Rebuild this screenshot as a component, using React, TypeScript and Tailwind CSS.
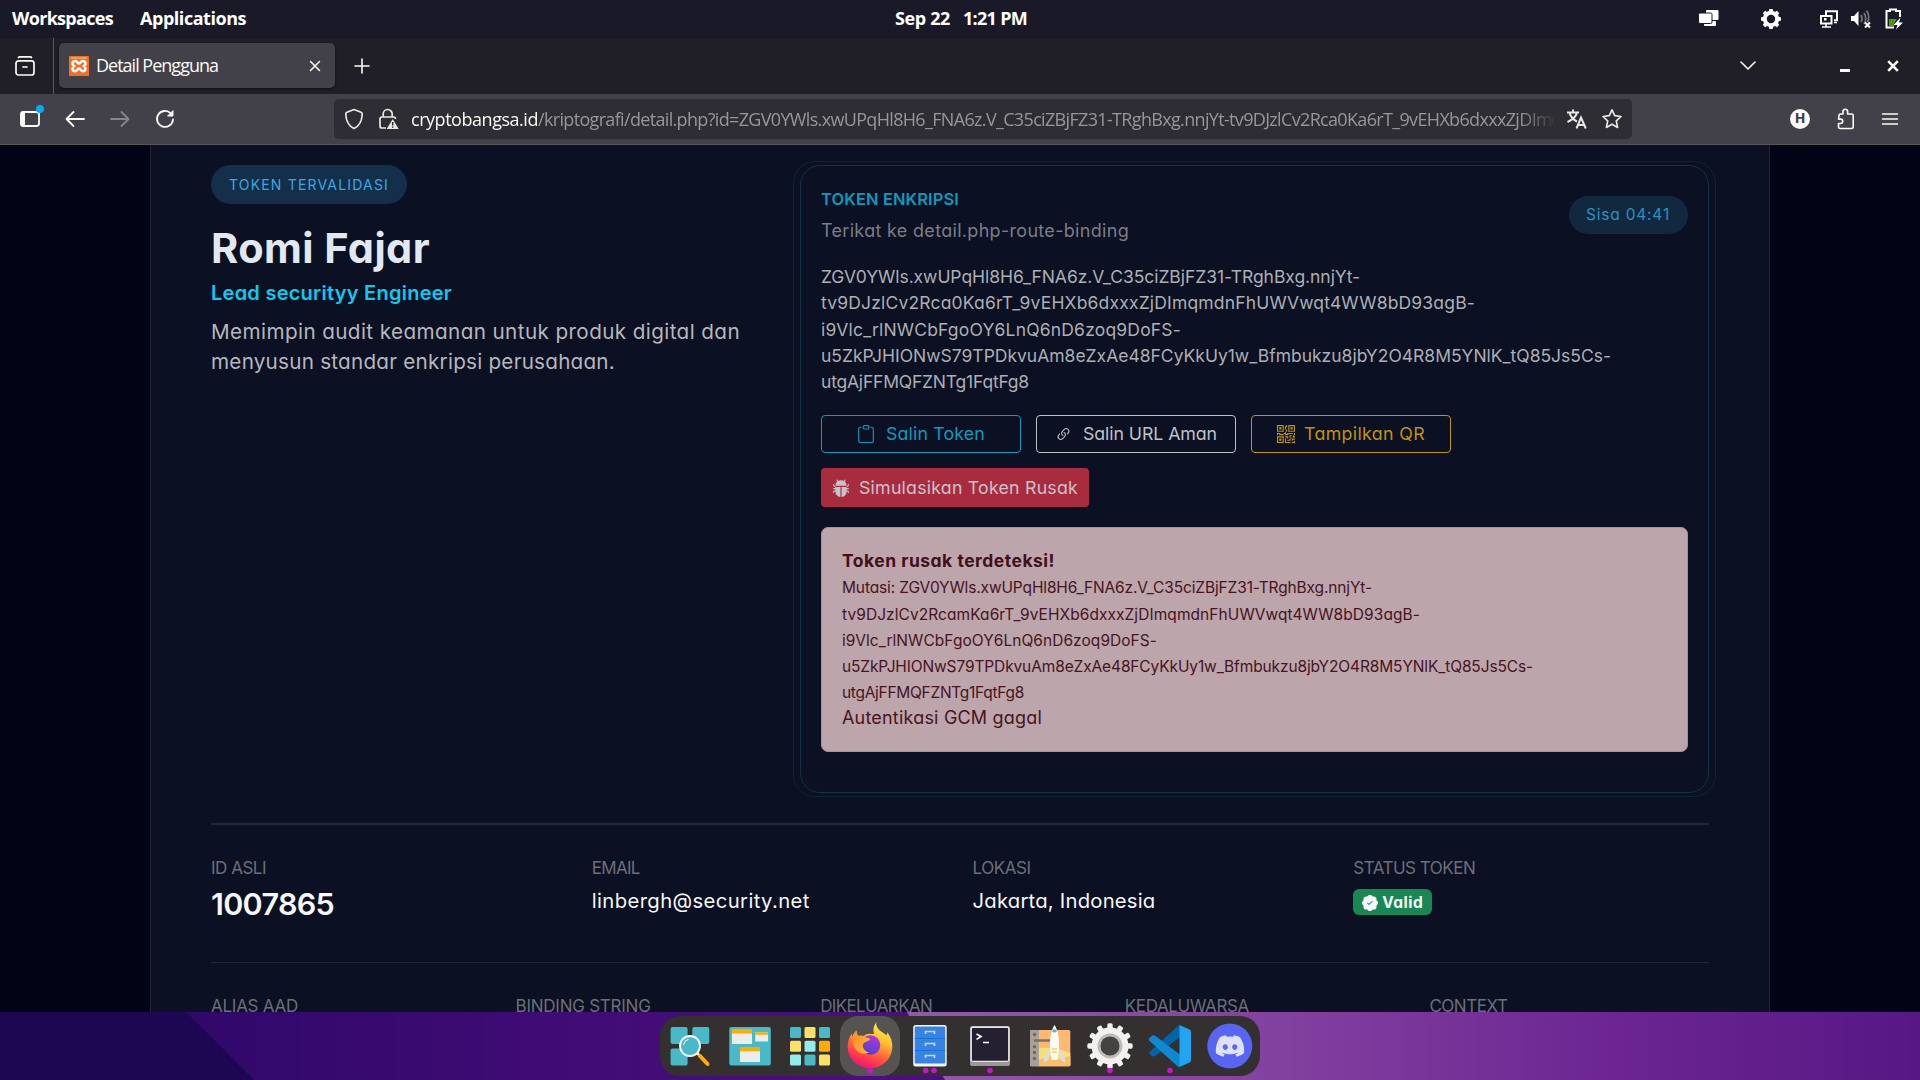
import { useLayoutEffect, useRef, useState, type ReactNode } from "react";
import { BsBugFill, BsClipboard, BsLink45Deg, BsPatchCheckFill, BsQrCode } from "react-icons/bs";
import { FaDiscord } from "react-icons/fa";

/** One line of text whose letter spacing is adjusted so that it spans `w` pixels. */
function Line({ w, className = "", children }: { w: number; className?: string; children: string }) {
  const ref = useRef<HTMLSpanElement>(null);
  const [spacing, setSpacing] = useState(0);
  useLayoutEffect(() => {
    const el = ref.current;
    if (!el) return;
    el.style.letterSpacing = "0px";
    const natural = el.getBoundingClientRect().width;
    const next = (w - natural) / children.length;
    el.style.letterSpacing = `${next}px`;
    setSpacing(next);
  }, [w, children]);
  return (
    <span className={`block ${className}`}>
      <span ref={ref} className="inline-block whitespace-pre" style={{ letterSpacing: `${spacing}px` }}>
        {children}
      </span>
    </span>
  );
}

function TopBar() {
  return (
    <header className="grid h-[38px] grid-cols-3 items-center bg-[#191928] pb-px text-[18px] font-bold text-white [font-stretch:88%]">
      <nav className="flex gap-[27px] pl-[12px]">
        <Line w={101}>Workspaces</Line>
        <Line w={106}>Applications</Line>
      </nav>
      <div className="flex justify-center gap-[13px] pl-[2px]">
        <Line w={55}>Sep 22</Line>
        <Line w={64}>1:21 PM</Line>
      </div>
      <div className="flex items-center justify-end pr-[16px]">
        <svg width="22" height="20" viewBox="0 0 22 20" className="mr-[40px]">
          <path d="M9 1h10.500a1 1 0 0 1 1 1v8a1 1 0 0 1-1 1H9a1 1 0 0 1-1-1V2a1 1 0 0 1 1-1z" fill="#fff" />
          <path d="M6 12h11a1 1 0 0 1 1 1v3a1 1 0 0 1-1 1H7a1 1 0 0 1-1-1z" fill="#fff" />
          <rect x="0.500" y="4" width="13.500" height="10.500" rx="1.500" fill="#fff" stroke="#191928" />
        </svg>
        <svg width="22" height="22" viewBox="0 0 22 22" className="mr-[37px]">
          <circle cx="11" cy="11" r="6.200" fill="none" stroke="#fff" strokeWidth="4" />
          {[0, 45, 90, 135, 180, 225, 270, 315].map((a) => (
            <rect key={a} x="9" y="1" width="4" height="4" rx="1" fill="#fff" transform={`rotate(${a} 11 11)`} />
          ))}
        </svg>
        <svg width="20" height="20" viewBox="0 0 20 20" className="mr-[11px]" fill="none">
          <path d="M7 6V2.200h11v9H15" stroke="#fff" strokeWidth="2" />
          <rect x="2" y="7" width="10.500" height="7.500" stroke="#fff" strokeWidth="2" />
          <path d="M5 9h2.500v2.500H5z" fill="#fff" />
          <path d="M3 18h9M7 15v3M15 13.500h3" stroke="#fff" strokeWidth="1.600" />
        </svg>
        <svg width="22" height="20" viewBox="0 0 22 20" className="mr-[12px]">
          <path d="M1 7h3l4.500-5v15L4 12H1z" fill="#fff" />
          <path d="M11 6q2 3.500 0 7M14 4q3.500 5.500 0 11M16.500 1.500q4 6 1 12" stroke="#74747e" strokeWidth="1.800" fill="none" />
          <path d="M15 13.500l5 5m0-5l-5 5" stroke="#fff" strokeWidth="2" />
        </svg>
        <svg width="20" height="22" viewBox="0 0 20 22">
          <path d="M6 3V1.500h6V3h4v6" stroke="#fff" strokeWidth="2" fill="none" />
          <path d="M7 3H2.500v16.500H10" stroke="#fff" strokeWidth="2" fill="none" />
          <path d="M5 11h8l-4 6h2l-1 1H5z" fill="#4e9a06" />
          <path d="M16.500 9.500L9.500 17h4l-1.500 4.500 7-7h-4z" fill="#fff" />
        </svg>
      </div>
    </header>
  );
}

function TabStrip() {
  return (
    <div className="flex h-[56px] items-center bg-[#201f28] text-[#fbfbf4]">
      <div className="flex h-full w-[54px] items-center justify-center border-r border-[#57575f] pr-[3px]">
        <svg width="20" height="20" viewBox="0 0 20 20" fill="none" stroke="#fbfbf4" strokeWidth="1.700" strokeLinecap="round">
          <path d="M3.500 1.500q.5-.7 1.500-.7h10q1 0 1.500.7" />
          <rect x="1" y="4.800" width="18" height="14.200" rx="2.500" />
          <path d="M8 11h4" />
        </svg>
      </div>
      <div className="ml-[5px] mt-[-1px] flex h-[45px] w-[276px] items-center rounded-[5px] bg-[#42414a] pl-[10px] pr-[14px] shadow-[0_1px_3px_rgba(0,0,0,0.6)]">
        <svg width="20" height="20" viewBox="0 0 20 20">
          <rect width="20" height="20" rx="1" fill="#f37021" />
          <path d="M2 1h16v2H2z" fill="#f79a62" />
          <path
            d="M6.300 5c-3 0-3.800 3.200-1.300 5-2.500 1.800-1.700 5.200 1 5.200 2.500 0 2-2.700 4-2.700s1.500 2.700 4 2.700c2.700 0 3.500-3.400 1-5.200 2.500-1.800 1.700-5-1.300-5C11.500 5 12 7.500 10 7.500S8.500 5 6.300 5z"
            fill="none" stroke="#fff" strokeWidth="2.600"
          />
        </svg>
        <Line w={122} className="ml-[7px] text-[18px]">Detail Pengguna</Line>
        <svg width="12" height="12" viewBox="0 0 12 12" stroke="#fbfbf4" strokeWidth="1.500" strokeLinecap="round" className="ml-auto">
          <path d="M1.500 1.500l9 9m0-9l-9 9" />
        </svg>
      </div>
      <svg width="16" height="16" viewBox="0 0 16 16" stroke="#fbfbf4" strokeWidth="1.600" strokeLinecap="round" className="ml-[19px]">
        <path d="M8 1v14M1 8h14" />
      </svg>
      <svg width="16" height="10" viewBox="0 0 16 10" fill="none" stroke="#fbfbf4" strokeWidth="1.600" strokeLinecap="round" strokeLinejoin="round" className="ml-auto mr-[84px]">
        <path d="M1 1l7 7 7-7" />
      </svg>
      <span className="mt-[8px] mr-[37px] h-[3px] w-[10px] bg-[#fbfbf4]" />
      <svg width="12" height="12" viewBox="0 0 12 12" stroke="#fbfbf4" strokeWidth="2.600" className="mr-[21px]">
        <path d="M1.200 1.200l9.600 9.600m0-9.600l-9.600 9.600" />
      </svg>
    </div>
  );
}

function NavBar() {
  return (
    <div className="flex h-[51px] items-center border-b border-[#55555b] bg-[#42414a] text-[18px]">
      <svg width="28" height="26" viewBox="0 0 28 26" className="mt-[-5px] ml-[18px]">
        <rect x="3" y="8" width="18" height="14" rx="2.500" fill="none" stroke="#fbfbf4" strokeWidth="1.800" />
        <path d="M4.500 7.500H7v15H4.500A2 2 0 0 1 2.500 20.500v-11a2 2 0 0 1 2-2z" fill="#fbfbf4" />
        <circle cx="22" cy="5" r="4" fill="#00adf5" />
      </svg>
      <svg width="20" height="18" viewBox="0 0 20 18" fill="none" stroke="#fbfbf4" strokeWidth="1.800" strokeLinecap="round" strokeLinejoin="round" className="ml-[19px]">
        <path d="M19 9H2M8.500 2L1.500 9l7 7" />
      </svg>
      <svg width="20" height="18" viewBox="0 0 20 18" fill="none" stroke="#85858a" strokeWidth="1.800" strokeLinecap="round" strokeLinejoin="round" className="ml-[25px]">
        <path d="M1 9h17M11.500 2l7 7-7 7" />
      </svg>
      <svg width="20" height="20" viewBox="0 0 20 20" fill="none" stroke="#fbfbf4" strokeWidth="1.800" strokeLinecap="round" className="ml-[25px]">
        <path d="M18 10.500a8 8 0 1 1-2.300-6.200" />
        <path d="M18 2v5h-5z" fill="#fbfbf4" strokeWidth="1" strokeLinejoin="round" />
      </svg>
      <div className="ml-[159px] flex h-[40px] w-[1298px] items-center rounded-[5px] bg-[#2e2d34] pl-[10px]">
        <svg width="20" height="22" viewBox="0 0 20 22" fill="none" stroke="#e8e8e2" strokeWidth="1.700" strokeLinejoin="round">
          <path d="M10 1.500l7 2.700q1.300.5 1.200 2C18 13 15 18 10 20.500 5 18 2 13 1.800 6.200q-.1-1.500 1.200-2z" />
        </svg>
        <svg width="20" height="22" viewBox="0 0 20 22" className="ml-[15px]">
          <path d="M4.200 9V6a4.500 4.500 0 0 1 9 0v3M7 20H3a2 2 0 0 1-2-2v-7a2 2 0 0 1 2-2h11.500q2 0 2 2" fill="none" stroke="#e8e8e2" strokeWidth="1.700" />
          <path d="M13.700 11l6 10H7.700z" fill="#e8e8e2" />
          <path d="M13.700 14v3.500m0 1v1.300" stroke="#2e2d34" strokeWidth="1.500" />
        </svg>
        <div className="ml-[12px] flex w-[1148px] overflow-hidden [mask-image:linear-gradient(to_right,#000_1108px,transparent_1146px)]">
          <Line w={127} className="shrink-0 text-[#fbfbf4]">cryptobangsa.id</Line>
          <Line w={998} className="shrink-0 text-[#97969a]">
            {"/kriptografi/detail.php?id=ZGV0YWls.xwUPqHl8H6_FNA6z.V_C35ciZBjFZ31-TRghBxg.nnjYt-tv9DJzlCv2Rca0Ka6rT_9vEHXb6dxxxZjDI"}
          </Line>
          <Line w={58} className="shrink-0 text-[#97969a]">mqmdn</Line>
        </div>
        <svg width="20" height="20" viewBox="0 0 20 20" fill="none" stroke="#e8e8e2" strokeWidth="2" className="ml-[8px] shrink-0">
          <path d="M0 3.500h12M6 .5v3M2.500 3.500q1.500 6 7.500 9M10 3.500Q8.500 9.500 .5 13" />
          <path d="M9.500 19.500l4.500-11 4.800 11M11 16h6.500" />
        </svg>
        <svg width="22" height="22" viewBox="0 0 22 22" fill="none" stroke="#e8e8e2" strokeWidth="1.700" strokeLinejoin="round" className="ml-[14px] shrink-0">
          <path d="M11 1.800l2.700 5.900 6.300.8-4.700 4.400 1.300 6.500L11 16.200l-5.600 3.200 1.300-6.500L2 8.500l6.300-.8z" />
        </svg>
      </div>
      <div className="ml-auto flex items-center pr-[21px]">
        <span className="flex h-[20px] w-[20px] items-center justify-center rounded-full bg-[#fbfbf4] font-[Inter] text-[13px] font-extrabold text-[#42414a]">H</span>
        <svg width="20" height="22" viewBox="0 0 20 22" fill="none" stroke="#fbfbf4" strokeWidth="1.600" strokeLinejoin="round" className="ml-[26px]">
          <path d="M3 7.500q0-1.500 1.500-1.500H7V3.500a2.300 2.300 0 0 1 4.600 0V6h3.900q1.700 0 1.700 1.700v11.100q0 1.700-1.700 1.700H4.200Q2.500 20.500 2.500 19v-3.500h2a2.200 2.200 0 0 0 0-4.400H2.500z" />
        </svg>
        <svg width="18" height="14" viewBox="0 0 18 14" stroke="#fbfbf4" strokeWidth="1.500" strokeLinecap="round" className="ml-[25px]">
          <path d="M1.500 2h15M1.500 7h15M1.500 12h15" />
        </svg>
      </div>
    </div>
  );
}

function Intro() {
  return (
    <div className="w-[582px] shrink-0 pt-[4px]">
      <div className="flex h-[39px] w-[196px] items-center rounded-full bg-[#142f49] pl-[18px] text-[14px] text-[#38a9e4]">
        <Line w={160}>TOKEN TERVALIDASI</Line>
      </div>
      <Line w={219} className="mt-[20px] text-[41.500px] leading-[48px] font-bold text-[#e2e8f0]">Romi Fajar</Line>
      <Line w={241} className="mt-[8px] text-[20px] leading-[26px] font-semibold text-[#0dcaf0]">Lead securityy Engineer</Line>
      <div className="mt-[11px] text-[20.700px] leading-[30px] text-[#b6b7bc]">
        <Line w={529}>Memimpin audit keamanan untuk produk digital dan</Line>
        <Line w={404}>menyusun standar enkripsi perusahaan.</Line>
      </div>
    </div>
  );
}

const tokenLines: [string, number][] = [
  ["ZGV0YWls.xwUPqHl8H6_FNA6z.V_C35ciZBjFZ31-TRghBxg.nnjYt-", 539],
  ["tv9DJzlCv2Rca0Ka6rT_9vEHXb6dxxxZjDImqmdnFhUWVwqt4WW8bD93agB-", 654],
  ["i9Vlc_rlNWCbFgoOY6LnQ6nD6zoq9DoFS-", 360],
  ["u5ZkPJHIONwS79TPDkvuAm8eZxAe48FCyKkUy1w_Bfmbukzu8jbY2O4R8M5YNlK_tQ85Js5Cs-", 790],
  ["utgAjFFMQFZNTg1FqtFg8", 208],
];

const mutatedLines: [string, number][] = [
  ["Mutasi: ZGV0YWls.xwUPqHl8H6_FNA6z.V_C35ciZBjFZ31-TRghBxg.nnjYt-", 530],
  ["tv9DJzlCv2RcamKa6rT_9vEHXb6dxxxZjDImqmdnFhUWVwqt4WW8bD93agB-", 578],
  ["i9Vlc_rlNWCbFgoOY6LnQ6nD6zoq9DoFS-", 315],
  ["u5ZkPJHIONwS79TPDkvuAm8eZxAe48FCyKkUy1w_Bfmbukzu8jbY2O4R8M5YNlK_tQ85Js5Cs-", 691],
  ["utgAjFFMQFZNTg1FqtFg8", 182],
];

function TokenCard() {
  return (
    <section className="h-[636px] w-[923px] shrink-0 rounded-[22px] border border-[#0e2434] px-[6px] py-[3px]">
      <div className="h-full rounded-[20px] border border-[#0c3346] px-[20px] pt-[17px]">
        <div className="flex items-start justify-between">
          <div className="leading-[32px]">
            <Line w={138} className="text-[16.500px] font-semibold text-[#0e9abd]">TOKEN ENKRIPSI</Line>
            <Line w={308} className="text-[18px] text-[#7b7e85]">Terikat ke detail.php-route-binding</Line>
          </div>
          <div className="mt-[13px] flex h-[38px] w-[119px] items-center rounded-full bg-[#12283f] pl-[17px] text-[15.500px] text-[#2a90c4]">
            <Line w={84}>Sisa 04:41</Line>
          </div>
        </div>
        <div className="mt-[17px] text-[17.500px] leading-[26.300px] text-[#adafb5]">
          {tokenLines.map(([t, w]) => (
            <Line key={t} w={w}>{t}</Line>
          ))}
        </div>
        <div className="mt-[20px] flex flex-wrap gap-[15px] text-[17.800px]">
          <button className="flex h-[38px] w-[200px] items-center rounded-[4px] border border-[#0e9abd] pl-[35px] text-[#0e9abd]">
            <BsClipboard size={18} />
            <Line w={99} className="ml-[11px]">Salin Token</Line>
          </button>
          <button className="flex h-[38px] w-[200px] items-center rounded-[4px] border border-[#bfc1c7] pl-[18px] text-[#bfc1c7]">
            <BsLink45Deg size={17} />
            <Line w={134} className="ml-[11px]">Salin URL Aman</Line>
          </button>
          <button className="flex h-[38px] w-[200px] items-center rounded-[4px] border border-[#c0930e] pl-[25px] text-[#c0930e]">
            <BsQrCode size={18} />
            <Line w={121} className="ml-[9px]">Tampilkan QR</Line>
          </button>
          <button className="flex h-[39px] w-[268px] items-center rounded-[4px] bg-[#a92c3e] pl-[11px] text-[#c8c3ca]">
            <BsBugFill size={18} />
            <Line w={219} className="ml-[9px]">Simulasikan Token Rusak</Line>
          </button>
        </div>
        <div className="mt-[20px] h-[225px] rounded-[7px] border border-[#b48a94] bg-[#bca5ab] px-[20px] pt-[20px] text-[#481322]">
          <Line w={213} className="text-[17.500px] leading-[26px] font-bold text-[#420f1b]">Token rusak terdeteksi!</Line>
          <div className="pt-px text-[15.500px] leading-[26.200px]">
            {mutatedLines.map(([t, w]) => (
              <Line key={t} w={w}>{t}</Line>
            ))}
          </div>
          <Line w={200} className="mt-[-2px] text-[18px] leading-[26px]">Autentikasi GCM gagal</Line>
        </div>
      </div>
    </section>
  );
}

function Field({ label, w, children }: { label: string; w: number; children?: ReactNode }) {
  return (
    <div>
      <Line w={w} className="text-[17px] leading-[26px] text-[#6b6f79]">{label}</Line>
      {children}
    </div>
  );
}

function Page() {
  return (
    <main className="flex h-[867px] justify-center overflow-hidden bg-[#010414] font-[Inter,sans-serif] [font-feature-settings:'cv11'] [font-stretch:100%]">
      <div className="h-full w-[1620px] border-x border-[#1f2536] bg-[#0b1022] pl-[60px] pt-[16px]">
        <div className="flex">
          <Intro />
          <TokenCard />
        </div>
        <div className="mt-[26px] h-[2px] w-[1498px] bg-[#222839]" />
        <div className="mt-[30px] grid h-[107px] w-[1523px] grid-cols-4 text-[20.300px] text-[#f6f7f8]">
          <Field label="ID ASLI" w={55}>
            <Line w={123} className="text-[30.500px] leading-[46px] font-semibold">1007865</Line>
          </Field>
          <Field label="EMAIL" w={48}>
            <Line w={218} className="leading-[40px]">linbergh@security.net</Line>
          </Field>
          <Field label="LOKASI" w={58}>
            <Line w={183} className="leading-[40px]">Jakarta, Indonesia</Line>
          </Field>
          <Field label="STATUS TOKEN" w={122}>
            <div className="mt-[8px] flex h-[26px] w-[79px] items-center rounded-[6px] bg-[#198754] pt-px pl-[9px] text-[15.500px] font-bold">
              <BsPatchCheckFill size={16} />
              <Line w={41} className="ml-[4px]">Valid</Line>
            </div>
          </Field>
        </div>
        <div className="h-px w-[1498px] bg-[#222839]" />
        <div className="mt-[30px] grid w-[1523px] grid-cols-5">
          <Field label="ALIAS AAD" w={87} />
          <Field label="BINDING STRING" w={135} />
          <Field label="DIKELUARKAN" w={112} />
          <Field label="KEDALUWARSA" w={124} />
          <Field label="CONTEXT" w={78} />
        </div>
      </div>
    </main>
  );
}

function Cell({ children, active, dots = 0 }: { children: ReactNode; active?: boolean; dots?: number }) {
  return (
    <svg width="60" height="60" viewBox="0 0 60 60" className={active ? "rounded-[18px] bg-[#565453]" : ""}>
      {children}
      {dots === 1 && <circle cx="30" cy="54.500" r="2.800" fill="#c814d2" />}
      {dots === 2 && (
        <>
          <circle cx="25.800" cy="54.500" r="2.800" fill="#c814d2" />
          <circle cx="34" cy="54.500" r="2.800" fill="#c814d2" />
        </>
      )}
    </svg>
  );
}

const tiles = ["#48b9c7", "#fae064", "#48b9c7", "#fae064", "#94ebeb", "#ffad00", "#94ebeb", "#48b9c7", "#fae064"];

function Dock() {
  return (
    <div className="flex h-[60px] w-[600px] rounded-[20px] bg-[#33302f]">
      <Cell>
        <rect x="10.600" y="11" width="17" height="17" rx="2" fill="#48b9c7" />
        <rect x="32.300" y="11" width="17" height="17" rx="2" fill="#48b9c7" />
        <rect x="10.600" y="32.500" width="17" height="17" rx="2" fill="#48b9c7" />
        <path d="M37 37l4 4" stroke="#fff" strokeWidth="2.500" />
        <path d="M40 40l7.500 8" stroke="#ffad00" strokeWidth="4" strokeLinecap="round" />
        <circle cx="30" cy="30" r="10" fill="#48b9c7" stroke="#fff" strokeWidth="1.800" />
        <path d="M23.500 29a7 7 0 0 1 5-5.800" stroke="#fff" fill="none" />
      </Cell>
      <Cell>
        <rect x="9.300" y="11" width="41.500" height="38.500" rx="2" fill="#48b9c7" />
        <path d="M12 13h20v15H12zM35.300 16.300H48v9.200H35.300zM20 31h20v15H20z" fill="#ececec" />
        <path d="M12 13h20v4.500H12zM35.300 16.300H48v2.400H35.300zM20 31h20v4.300H20z" fill="#ffad00" />
      </Cell>
      <Cell>
        {tiles.map((c, i) => (
          <rect key={i} x={10 + (i % 3) * 14.500} y={11 + Math.floor(i / 3) * 13.700} width="11" height="11" rx="1.500" fill={c} />
        ))}
      </Cell>
      <Cell active dots={1}>
        <defs>
          <linearGradient id="ffOuter" x1="0.750" y1="0" x2="0.300" y2="1">
            <stop offset="0" stopColor="#fff44f" />
            <stop offset="0.350" stopColor="#ffbd2e" />
            <stop offset="0.600" stopColor="#ff6b36" />
            <stop offset="0.850" stopColor="#ff2a5a" />
            <stop offset="1" stopColor="#e31587" />
          </linearGradient>
          <linearGradient id="ffGlobe" x1="0.700" y1="0" x2="0.300" y2="1">
            <stop offset="0" stopColor="#b833e1" />
            <stop offset="0.500" stopColor="#7a3ddb" />
            <stop offset="1" stopColor="#4a45c8" />
          </linearGradient>
          <linearGradient id="ffHead" x1="0" y1="0" x2="1" y2="0.600">
            <stop offset="0" stopColor="#ff8a2b" />
            <stop offset="1" stopColor="#ffb52e" />
          </linearGradient>
        </defs>
        <path d="M36.500 5.700c-1 3 .5 6 3 8.500l7 5q1-1 .5-3 5.500 6 5.300 14.500C52 43 42.500 52 30 52S8 43 7.700 31c-.1-5 1.500-10 4-13.500l.6 3q1.500-3.500 4-6l.8 5 5 2q4-4.500 9-3.500l3 0c-1.500-4-.5-8.500 2.400-12.300z" fill="url(#ffOuter)" />
        <circle cx="30.500" cy="29" r="9.800" fill="url(#ffGlobe)" />
        <path d="M12.500 20.500q1.500-3.500 4-6 .3 3.500 2 5.500c3-1 6 0 7.500 1.500q4 .5 4 1.700c-.3 1.500-3.500 2.200-5 3q-3 1.600-2 5 1 4 6 5.300-7 3-12-1.500-5-5-4.500-14.500z" fill="url(#ffHead)" />
      </Cell>
      <Cell dots={2}>
        <rect x="13.200" y="9" width="33.500" height="41.500" rx="2.500" fill="#f6f5f4" />
        <rect x="14.700" y="10.500" width="30.500" height="37" rx="1" fill="#3584e4" />
        <path d="M14.700 22.500h30.500M14.700 34.500h30.500" stroke="#1c71d8" />
        <path d="M25.500 18v-2.500h9V18M25.500 30v-2.500h9V30M25.500 42v-2.500h9V42" stroke="#d3d1cf" strokeWidth="1.700" fill="none" />
      </Cell>
      <Cell dots={1}>
        <rect x="10" y="10" width="40" height="39.700" rx="2.500" fill="#c0bfbc" />
        <path d="M10 45h40v2.500q0 2.300-2.300 2.300H12.300Q10 49.800 10 47.500z" fill="#9a9996" />
        <rect x="11.300" y="11.300" width="37.400" height="34" rx="1.500" fill="#241f31" stroke="#e6e5e3" strokeWidth="1.200" />
        <path d="M16.500 18l4.500 2.600-4.500 2.800M23 26.500h6" stroke="#fff" strokeWidth="1.700" fill="none" />
      </Cell>
      <Cell>
        <rect x="10" y="14" width="40.300" height="36.300" rx="1.500" fill="#ffb870" />
        <path d="M19 32q16-1 31.300 5v12q0 1.300-1.300 1.300H19z" fill="#f9df75" />
        <path d="M19 44l10-4 10 3 11.300-3v10H19z" fill="#fdbd6a" />
        <path d="M11.500 14H19v36.300h-7.500q-1.500 0-1.500-1.500V15.500q0-1.500 1.500-1.500z" fill="#a8a09b" />
        <path d="M14 24.500h21" stroke="#7a706b" strokeWidth="2.500" />
        {[18.500, 30.700, 36.500, 42.500].map((y) => (
          <circle key={y} cx="14.500" cy={y} r="1.700" fill="#6f6864" />
        ))}
        <path d="M30 32l-5.500 7L23.700 47l5-3.500zM39 32l5.500 7 .8 8-5-3.500z" fill="#deddda" />
        <path d="M34.500 9c3.500 5 5 14 4.500 23l-1.500 12h-6L30 32c-.5-9 1-18 4.500-23z" fill="#fafafa" />
        <path d="M32.700 13.500h3.600l.5 2.200q-2.300 1.500-4.600 0z" fill="#48b9c7" />
        <path d="M31.500 33h6M32 36h5" stroke="#f6d75e" strokeWidth="1.300" />
      </Cell>
      <Cell dots={1}>
        {Array.from({ length: 12 }, (_, i) => (
          <rect key={i} x="27.300" y="7.300" width="5.400" height="8" rx="1.600" fill="#f2f1f0" transform={`rotate(${i * 30} 30 30)`} />
        ))}
        <circle cx="30" cy="30" r="14" fill="#33302f" stroke="#f2f1f0" strokeWidth="9" />
        <circle cx="30" cy="30" r="11" fill="none" stroke="#bdbbb8" strokeWidth="3" />
        <circle cx="30" cy="30" r="9.500" fill="#444342" />
      </Cell>
      <Cell dots={1}>
        <path d="M39.500 9L13 33.500 8.700 37l3.300 4 3-.6L42 20z" fill="#0065a9" transform="translate(0 -.5)" />
        <path d="M40 50.500L12.500 26.500 15 19.500 42 40z" fill="#007acc" />
        <path d="M12.300 19.500q1-.7 2 0L42 40.500 39.500 51q-1 .3-2-.7L9 24.500q-.8-1 0-2z" fill="#0f88d2" />
        <path d="M39.500 9l10 4.500q1.500.8 1.500 2.300v28.500q0 1.400-1.500 2.200L39.500 51z" fill="#22a4f0" />
      </Cell>
      <Cell>
        <circle cx="29.800" cy="30" r="22.500" fill="#5865f2" />
        <FaDiscord x={14.500} y={14.500} size={31} color="#dfe1fc" />
      </Cell>
    </div>
  );
}

function Desktop() {
  return (
    <footer className="relative flex h-[68px] justify-center bg-[linear-gradient(90deg,#30086a_10%,#440d78_35%,#4c107e_48%)] pt-[4px]">
      <svg width="1920" height="68" viewBox="0 0 1920 68" className="absolute inset-0">
        <defs>
          <linearGradient id="ridge" x1="0" x2="1">
            <stop offset="0" stopColor="#935aa8" />
            <stop offset="0.350" stopColor="#8442a0" />
            <stop offset="0.700" stopColor="#6c2592" />
            <stop offset="1" stopColor="#561884" />
          </linearGradient>
        </defs>
        <path d="M0 0h186l68 68H0z" fill="#1d0752" />
        <path d="M907 0h1013v68H945z" fill="url(#ridge)" />
      </svg>
      <div className="relative">
        <Dock />
      </div>
    </footer>
  );
}

export default function App() {
  return (
    <div className="h-[1080px] w-[1920px] overflow-hidden font-['Open_Sans','Noto_Sans',sans-serif] [font-stretch:88%]">
      <TopBar />
      <TabStrip />
      <NavBar />
      <Page />
      <Desktop />
    </div>
  );
}
